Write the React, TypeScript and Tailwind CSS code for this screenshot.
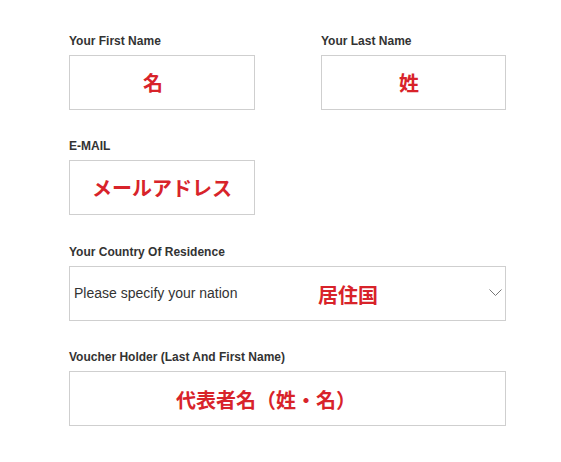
import React from 'react';

const jp = "font-['Noto_Sans_CJK_JP','Noto_Sans_CJK_SC',sans-serif]";

function Label({ children }: { children: React.ReactNode }) {
  return (
    <div className="h-4 mb-[6px] text-[12px] leading-4 font-bold text-[#333]">{children}</div>
  );
}

function Hint({ children, className = '' }: { children: React.ReactNode; className?: string }) {
  return (
    <span className={`${jp} text-[20px] leading-none font-bold text-[#d8232a] whitespace-nowrap ${className}`}>
      {children}
    </span>
  );
}

export default function App() {
  return (
    <div className="min-h-screen bg-white pl-[69px] pt-[33px] font-['Liberation_Sans',Arial,sans-serif]">
      {/* Name row */}
      <div className="flex gap-[66px] mb-[28px]">
        <div className="w-[186px]">
          <Label>Your First Name</Label>
          <div className="h-[55px] border border-[#cfcfcf] flex items-center pl-[73px]">
            <Hint className="mt-[1px]">名</Hint>
          </div>
        </div>
        <div className="w-[185px]">
          <Label>Your Last Name</Label>
          <div className="h-[55px] border border-[#cfcfcf] flex items-center pl-[77px]">
            <Hint className="mt-[1px]">姓</Hint>
          </div>
        </div>
      </div>

      {/* Email */}
      <div className="w-[186px] mb-[29px]">
        <Label>E-MAIL</Label>
        <div className="h-[55px] border border-[#cfcfcf] flex items-center justify-center">
          <Hint>メールアドレス</Hint>
        </div>
      </div>

      {/* Country */}
      <div className="w-[437px] mb-[28px]">
        <Label>Your Country Of Residence</Label>
        <div className="relative h-[55px] border border-[#cfcfcf] flex items-center pl-[4px] pr-[3px]">
          <span className="text-[14px] text-[#333] flex-1">Please specify your nation</span>
          <Hint className="absolute left-[248px] top-[18px]">居住国</Hint>
          <svg width="13" height="8" viewBox="0 0 13 8" className="mb-[2px]">
            <polyline points="0.5,0.5 6.5,6.5 12.5,0.5" fill="none" stroke="#777" strokeWidth="1" />
          </svg>
        </div>
      </div>

      {/* Voucher holder */}
      <div className="w-[437px]">
        <Label>Voucher Holder (Last And First Name)</Label>
        <div className="h-[55px] border border-[#cfcfcf] flex items-center pl-[106px]">
          <Hint className="mt-[2px]">代表者名（姓・名）</Hint>
        </div>
      </div>
    </div>
  );
}
